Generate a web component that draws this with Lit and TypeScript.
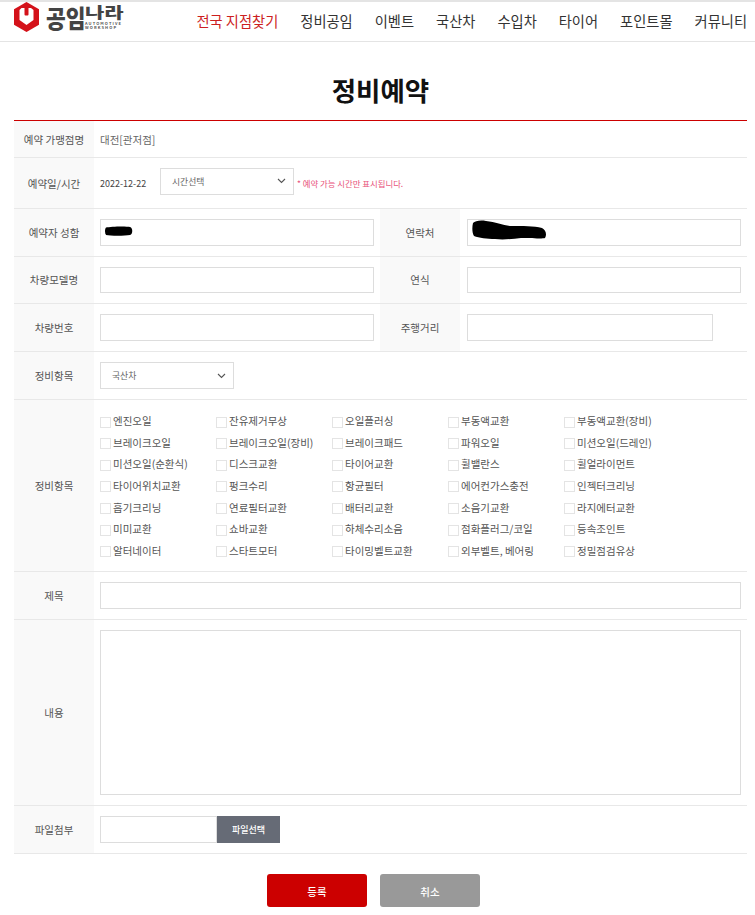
import { LitElement, html, css, svg } from "lit";
import { customElement } from "lit/decorators.js";

const NAV = ["정비공임", "이벤트", "국산차", "수입차", "타이어", "포인트몰", "커뮤니티"];
const ITEMS = [
  "엔진오일", "잔유제거무상", "오일플러싱", "부동액교환", "부동액교환(장비)",
  "브레이크오일", "브레이크오일(장비)", "브레이크패드", "파워오일", "미션오일(드레인)",
  "미션오일(순환식)", "디스크교환", "타이어교환", "휠밸란스", "휠얼라이먼트",
  "타이어위치교환", "펑크수리", "항균필터", "에어컨가스충전", "인젝터크리닝",
  "흡기크리닝", "연료필터교환", "배터리교환", "소음기교환", "라지에터교환",
  "미미교환", "쇼바교환", "하체수리소음", "점화플러그/코일", "등속조인트",
  "알터네이터", "스타트모터", "타이밍벨트교환", "외부벨트, 베어링", "정밀점검유상",
];

const chevron = svg`<svg class="chev" width="9" height="6" viewBox="0 0 9 6"><path d="M1 1l3.5 3.5L8 1" fill="none" stroke="#555" stroke-width="1.1"/></svg>`;

@customElement("app-root")
export class AppRoot extends LitElement {
  static styles = css`
    :host {
      display: block;
      width: 755px;
      height: 915px;
      overflow: hidden;
      background: #fff;
      font-family: "Noto Sans CJK KR", "Noto Sans", sans-serif;
      color: #555;
      font-size: 10.5px;
    }
    * { box-sizing: border-box; }
    header {
      height: 42px;
      border-top: 2px solid #e4e4e4;
      border-bottom: 1px solid #e4e4e4;
      display: flex;
      align-items: center;
      justify-content: space-between;
      padding-left: 14px;
      padding-right: 8px;
    }
    .logo { display: flex; align-items: flex-start; height: 39px; }
    .logo-mark { margin-right: 7px; }
    .logo-a {
      display: block;
      font-size: 21.5px;
      font-weight: 900;
      color: #444;
      line-height: 28px;
      width: 39px;
      white-space: nowrap;
      transform: scaleY(1.15);
      transform-origin: 0 0;
    }
    .logo-b { display: flex; flex-direction: column; width: 40px; padding-top: 1px; }
    .logo-c {
      display: block;
      font-size: 21px;
      font-weight: 900;
      color: #444;
      line-height: 18px;
      white-space: nowrap;
      transform: scaleY(0.72);
      transform-origin: 0 50%;
    }
    .logo-d { font-size: 4px; line-height: 4.2px; font-weight: 700; color: #555; letter-spacing: 1.1px; white-space: nowrap; }
    nav { display: flex; gap: 22px; font-size: 14.25px; color: #333; line-height: 20px; padding-bottom: 2px; }
    nav .hot { color: #cc1f1f; }
    h1 {
      margin: 0;
      height: 78px;
      padding: 28px 0 0 6px;
      text-align: center;
      font-size: 26.5px;
      line-height: 40px;
      font-weight: 700;
      color: #111;
    }
    .table { margin: 0 8px 0 14px; border-top: 1px solid #cc0000; }
    .row { display: flex; border-bottom: 1px solid #e8e8e8; }
    .h37 { height: 37px; }
    .h51 { height: 51px; }
    .h48 { height: 48px; }
    .h47 { height: 47px; }
    .h172 { height: 172px; }
    .h186 { height: 186px; }
    .th {
      width: 80px;
      flex: none;
      background: #f9f9f9;
      display: flex;
      align-items: center;
      justify-content: center;
      white-space: nowrap;
    }
    .th.up { padding-bottom: 2px; }
    .td { display: flex; align-items: center; padding-left: 6px; flex: none; width: 286px; }
    .td.wide { flex: 1; width: auto; }
    .td.last { width: 287px; padding-left: 7px; }
    .muted { color: #666; }
    .when { padding-bottom: 4px; }
    .date { color: #444; font-size: 9px; width: 60px; padding-top: 4px; }
    .note { color: #e8517a; font-size: 8.4px; margin-left: 3px; padding-top: 4px; }
    .field {
      display: block;
      width: 274px;
      height: 27px;
      border: 1px solid #ddd;
      background: #fff;
      padding: 0;
      margin: 0;
      position: relative;
    }
    input.field { outline: none; }
    .thin { height: 26px; }
    .short { width: 246px; }
    .full { width: 641px; }
    .redact { position: absolute; left: 4px; top: 6px; }
    .redact2 { position: absolute; left: 4px; top: 0; }
    .select {
      width: 134px;
      height: 27px;
      border: 1px solid #ddd;
      background: #fff;
      display: flex;
      align-items: center;
      justify-content: space-between;
      padding: 0 7px 0 11px;
      font-size: 8.8px;
      color: #666;
    }
    .grid {
      display: grid;
      grid-template-columns: repeat(5, 116px);
      grid-auto-rows: 21.65px;
    }
    .check { display: flex; align-items: center; gap: 2px; white-space: nowrap; color: #555; }
    .check i { width: 11px; height: 11px; border: 1px solid #e4e4e4; background: #fff; flex: none; margin-top: 3px; }
    textarea.field { width: 641px; height: 165px; resize: none; outline: none; }
    .file { display: flex; }
    .file .name { width: 117px; height: 27px; border: 1px solid #ddd; background: #fff; }
    .file .pick {
      width: 63px;
      height: 27px;
      background: #666b76;
      color: #fff;
      font-size: 9px;
      font-weight: 500;
      display: flex;
      align-items: center;
      justify-content: center;
    }
    .actions { display: flex; justify-content: center; gap: 13px; padding: 20px 8px 0 0; }
    .btn {
      width: 100px;
      height: 33px;
      border-radius: 3px;
      color: #fff;
      display: flex;
      align-items: center;
      justify-content: center;
      padding-top: 2px;
      font-size: 10.5px;
      font-weight: 500;
    }
    .red { background: #cc0000; }
    .gray { background: #999; }
  `;

  render() {
    return html`
      <header>
        <div class="logo">
          <svg class="logo-mark" width="25" height="30" viewBox="0 0 25 30">
            <path d="M12.500 0L25 7.300v15.400L12.500 30 0 22.700V7.300z" fill="#d4121a"/>
            <path d="M7.500 6H17l2.500 2v10l-7 5-7-5V8z" fill="#fff"/>
            <path d="M10.500 5h4v7.500a1 1 0 0 1-1 1h-2a1 1 0 0 1-1-1z" fill="#d4121a"/>
          </svg>
          <span class="logo-a">공임</span>
          <div class="logo-b">
            <span class="logo-c">나라</span>
            <span class="logo-d">AUTOMOTIVE</span>
            <span class="logo-d">WORKSHOP</span>
          </div>
        </div>
        <nav>
          <span class="hot">전국 지점찾기</span>
          ${NAV.map((n) => html`<span>${n}</span>`)}
        </nav>
      </header>
      <h1>정비예약</h1>
      <div class="table">
        <div class="row h37">
          <div class="th">예약 가맹점명</div>
          <div class="td wide muted">대전[관저점]</div>
        </div>
        <div class="row h51">
          <div class="th">예약일/시간</div>
          <div class="td wide when">
            <span class="date">2022-12-22</span>
            <div class="select"><span>시간선택</span>${chevron}</div>
            <span class="note">* 예약 가능 시간만 표시됩니다.</span>
          </div>
        </div>
        <div class="row h48">
          <div class="th">예약자 성함</div>
          <div class="td">
            <div class="field">
              <svg class="redact" width="28" height="10" viewBox="0 0 28 10"><path d="M1 1.500C6 .3 22 0 25 1c3 1 3 7 0 8-5 1-20 1-24 0C-.3 7-.3 3 1 1.500z" fill="#000"/></svg>
            </div>
          </div>
          <div class="th">연락처</div>
          <div class="td last">
            <div class="field">
              <svg class="redact2" width="76" height="20" viewBox="0 0 76 20"><path d="M1 3C3 1 8 0 14 1c10 1 18 5 26 5 10 0 22 0 30 2 4 2 5 7 3 10-2 1-18 0-24 0-8 1-18 2-26 1-8 0-16-1-21-3C0 13 0 7 1 3z" fill="#000"/></svg>
            </div>
          </div>
        </div>
        <div class="row h47">
          <div class="th up">차량모델명</div>
          <div class="td"><input class="field thin" /></div>
          <div class="th up">연식</div>
          <div class="td last"><input class="field thin" /></div>
        </div>
        <div class="row h48">
          <div class="th">차량번호</div>
          <div class="td"><input class="field" /></div>
          <div class="th">주행거리</div>
          <div class="td last"><input class="field short" /></div>
        </div>
        <div class="row h48">
          <div class="th">정비항목</div>
          <div class="td wide">
            <div class="select"><span>국산차</span>${chevron}</div>
          </div>
        </div>
        <div class="row h172">
          <div class="th">정비항목</div>
          <div class="td wide">
            <div class="grid">
              ${ITEMS.map((t) => html`<label class="check"><i></i><span>${t}</span></label>`)}
            </div>
          </div>
        </div>
        <div class="row h48">
          <div class="th">제목</div>
          <div class="td wide"><input class="field full" /></div>
        </div>
        <div class="row h186">
          <div class="th">내용</div>
          <div class="td wide"><textarea class="field"></textarea></div>
        </div>
        <div class="row h48">
          <div class="th">파일첨부</div>
          <div class="td wide">
            <div class="file"><div class="name"></div><div class="pick">파일선택</div></div>
          </div>
        </div>
      </div>
      <div class="actions">
        <div class="btn red">등록</div>
        <div class="btn gray">취소</div>
      </div>
    `;
  }
}
